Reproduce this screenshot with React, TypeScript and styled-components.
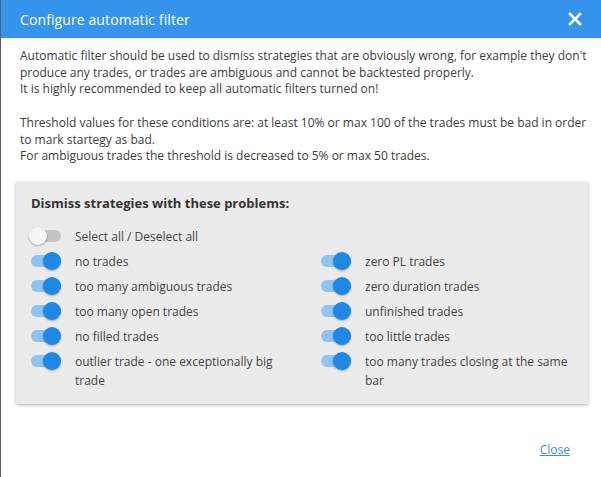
import React, { useState } from "react";
import styled, { createGlobalStyle } from "styled-components";

const GlobalStyle = createGlobalStyle`
  html, body {
    margin: 0;
    padding: 0;
    background: #5d6168;
  }
  body {
    font-family: "Open Sans", "Liberation Sans", sans-serif;
  }
`;

const Backdrop = styled.div`
  width: 601px;
  height: 477px;
  padding-left: 1px;
  box-sizing: border-box;
`;

const Modal = styled.div`
  background: #fff;
  height: 100%;
  display: flex;
  flex-direction: column;
`;

const Header = styled.div`
  height: 38px;
  background: #3594eb;
  color: #fff;
  display: flex;
  align-items: center;
  justify-content: space-between;
  padding: 0 19px 0 19px;
  box-sizing: border-box;
`;

const Title = styled.h3`
  margin: 0;
  font-size: 14px;
  font-weight: 400;
  letter-spacing: 0.1px;
`;

const CloseX = styled.button`
  border: none;
  background: transparent;
  padding: 0;
  width: 14px;
  height: 14px;
  display: flex;
  cursor: pointer;
`;

const Body = styled.div`
  flex: 1;
  padding: 10px 12px 0 19px;
  font-size: 12px;
  color: #3c3c3c;
`;

const Intro = styled.p`
  margin: 0 0 17px;
  line-height: 16.7px;
`;

const Panel = styled.div`
  background: #ebebeb;
  box-shadow: 0 1px 3px rgba(0, 0, 0, 0.3);
  margin-left: -4px;
  width: 572px;
  padding: 12px 15px 14px;
  box-sizing: border-box;
`;

const PanelTitle = styled.h4`
  margin: 0 0 15px;
  font-size: 13px;
  font-weight: 700;
  color: #333;
`;

const Grid = styled.div`
  display: grid;
  grid-template-columns: 290px 1fr;
  row-gap: 6px;
`;

const Item = styled.label<{ full?: boolean }>`
  display: flex;
  align-items: flex-start;
  grid-column: ${(p) => (p.full ? "1 / span 2" : "auto")};
  cursor: pointer;
`;

const Track = styled.span<{ on: boolean }>`
  position: relative;
  flex: none;
  width: 30px;
  height: 12px;
  margin-top: 3px;
  border-radius: 6px;
  background: ${(p) => (p.on ? "#8fc4f2" : "#c4c4c4")};
`;

const Knob = styled.span<{ on: boolean }>`
  position: absolute;
  top: -3px;
  left: ${(p) => (p.on ? "12px" : "-2px")};
  width: 18px;
  height: 18px;
  border-radius: 50%;
  background: ${(p) => (p.on ? "#1e88e5" : "#f5f5f5")};
  box-shadow: 0 1px 2px rgba(0, 0, 0, 0.3);
`;

const Label = styled.span`
  margin-left: 14px;
  width: 205px;
  line-height: 19px;
  color: #444;
`;

const Footer = styled.div`
  display: flex;
  justify-content: flex-end;
  padding: 0 31px 19px 0;
`;

const CloseLink = styled.a`
  font-size: 12px;
  color: #3d8ee6;
  text-decoration: underline;
  cursor: pointer;
`;

type Filter = { label: string; on: boolean };

const left: Filter[] = [
  { label: "no trades", on: true },
  { label: "too many ambiguous trades", on: true },
  { label: "too many open trades", on: true },
  { label: "no filled trades", on: true },
  { label: "outlier trade - one exceptionally big trade", on: true },
];

const right: Filter[] = [
  { label: "zero PL trades", on: true },
  { label: "zero duration trades", on: true },
  { label: "unfinished trades", on: true },
  { label: "too little trades", on: true },
  { label: "too many trades closing at the same bar", on: true },
];

const Toggle: React.FC<{ on: boolean }> = ({ on }) => (
  <Track on={on}>
    <Knob on={on} />
  </Track>
);

const App: React.FC = () => {
  const [all] = useState(false);
  const rows: Filter[] = [];
  left.forEach((f, i) => {
    rows.push(f, right[i]);
  });

  return (
    <Backdrop>
      <GlobalStyle />
      <Modal>
        <Header>
          <Title>Configure automatic filter</Title>
          <CloseX aria-label="close">
            <svg width="14" height="14" viewBox="0 0 14 14">
              <path d="M2 2 L12 12 M12 2 L2 12" stroke="#fff" strokeWidth="2.6" strokeLinecap="square" />
            </svg>
          </CloseX>
        </Header>
        <Body>
          <Intro>
            Automatic filter should be used to dismiss strategies that are obviously wrong, for example they don't
            produce any trades, or trades are ambiguous and cannot be backtested properly.
            <br />
            It is highly recommended to keep all automatic filters turned on!
            <br />
            <br />
            Threshold values for these conditions are: at least 10% or max 100 of the trades must be bad in order
            to mark startegy as bad.
            <br />
            For ambiguous trades the threshold is decreased to 5% or max 50 trades.
          </Intro>
          <Panel>
            <PanelTitle>Dismiss strategies with these problems:</PanelTitle>
            <Grid>
              <Item full>
                <Toggle on={all} />
                <Label>Select all / Deselect all</Label>
              </Item>
              {rows.map((f) => (
                <Item key={f.label}>
                  <Toggle on={f.on} />
                  <Label>{f.label}</Label>
                </Item>
              ))}
            </Grid>
          </Panel>
        </Body>
        <Footer>
          <CloseLink>Close</CloseLink>
        </Footer>
      </Modal>
    </Backdrop>
  );
};

export default App;
